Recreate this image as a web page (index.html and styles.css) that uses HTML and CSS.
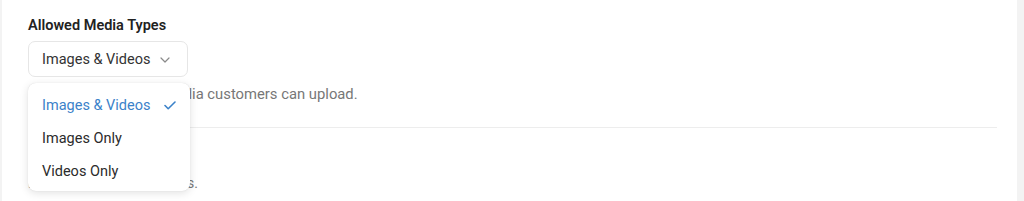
FILE: index.html
```html
<!DOCTYPE html>
<html lang="en">
<head>
    <meta charset="UTF-8">
    <meta name="viewport" content="width=device-width, initial-scale=1.0">
    <title>Media Settings</title>
    <link rel="stylesheet" href="styles.css">
</head>
<body>
    <div class="page">
        <div class="card">
            <div class="field">
                <label class="field-label">Allowed Media Types</label>
                <div class="select-wrap">
                    <button class="select" type="button">
                        <span>Images &amp; Videos</span>
                        <svg class="chevron" width="10" height="6" viewBox="0 0 10 6">
                            <path d="M1 1l4 4 4-4" fill="none" stroke="#8a8a8a" stroke-width="1.2" stroke-linecap="round" stroke-linejoin="round"/>
                        </svg>
                    </button>
                    <ul class="menu">
                        <li class="menu-item selected">
                            <span>Images &amp; Videos</span>
                            <svg width="12" height="9" viewBox="0 0 12 9">
                                <path d="M1 4.5l3.2 3.2L11 1" fill="none" stroke="#3b82c9" stroke-width="1.6" stroke-linecap="round" stroke-linejoin="round"/>
                            </svg>
                        </li>
                        <li class="menu-item">Images Only</li>
                        <li class="menu-item">Videos Only</li>
                    </ul>
                </div>
                <p class="help">Choose the types of media customers can upload.</p>
            </div>

            <div class="divider"></div>

            <div class="field">
                <label class="field-label">Max Uploads</label>
                <p class="help small">Limit the number of videos.</p>
            </div>
        </div>
    </div>
</body>
</html>
```

FILE: styles.css
```css
body {
    margin: 0;
    background-color: #f3f3f3;
    font-family: Roboto, "Liberation Sans", Arial, sans-serif;
    color: #2b2b2b;
}

.page {
    display: flex;
    height: 201px;
    padding: 0 7px 0 2px;
}

.card {
    flex: 1;
    background-color: #fff;
    padding: 16px 20px 0 26px;
    overflow: hidden;
}

.field-label {
    display: block;
    font-size: 14.5px;
    font-weight: 600;
    line-height: 20px;
    color: #222;
    margin-bottom: 5px;
}

.select-wrap {
    position: relative;
    width: 160px;
}

.select {
    display: flex;
    align-items: center;
    justify-content: space-between;
    width: 160px;
    height: 36px;
    padding: 0 17px 0 13px;
    background: #fff;
    border: 1px solid #e6e6e6;
    border-radius: 7px;
    font-family: inherit;
    font-size: 14.5px;
    color: #333;
    cursor: pointer;
}

.chevron {
    margin-top: 1px;
}

.help {
    margin: 7px 0 0;
    font-size: 14.8px;
    line-height: 20px;
    color: #777;
}

.help.small {
    margin-top: 13px;
    font-size: 14px;
}

.divider {
    height: 1px;
    background-color: #ededed;
    margin: 23px 0 0;
}

.field + .divider + .field {
    padding-top: 12px;
}

.menu {
    position: absolute;
    top: 42px;
    left: 0;
    z-index: 10;
    width: 162px;
    margin: 0;
    padding: 6px 0 3px;
    list-style: none;
    background: #fff;
    border-radius: 8px;
    box-shadow: 0 2px 8px rgba(0, 0, 0, 0.12), 0 0 1px rgba(0, 0, 0, 0.15);
}

.menu-item {
    display: flex;
    align-items: center;
    justify-content: space-between;
    height: 33px;
    padding: 0 14px 0 14px;
    font-size: 14.5px;
    color: #2b2b2b;
}

.menu-item.selected {
    color: #3b82c9;
}
```
